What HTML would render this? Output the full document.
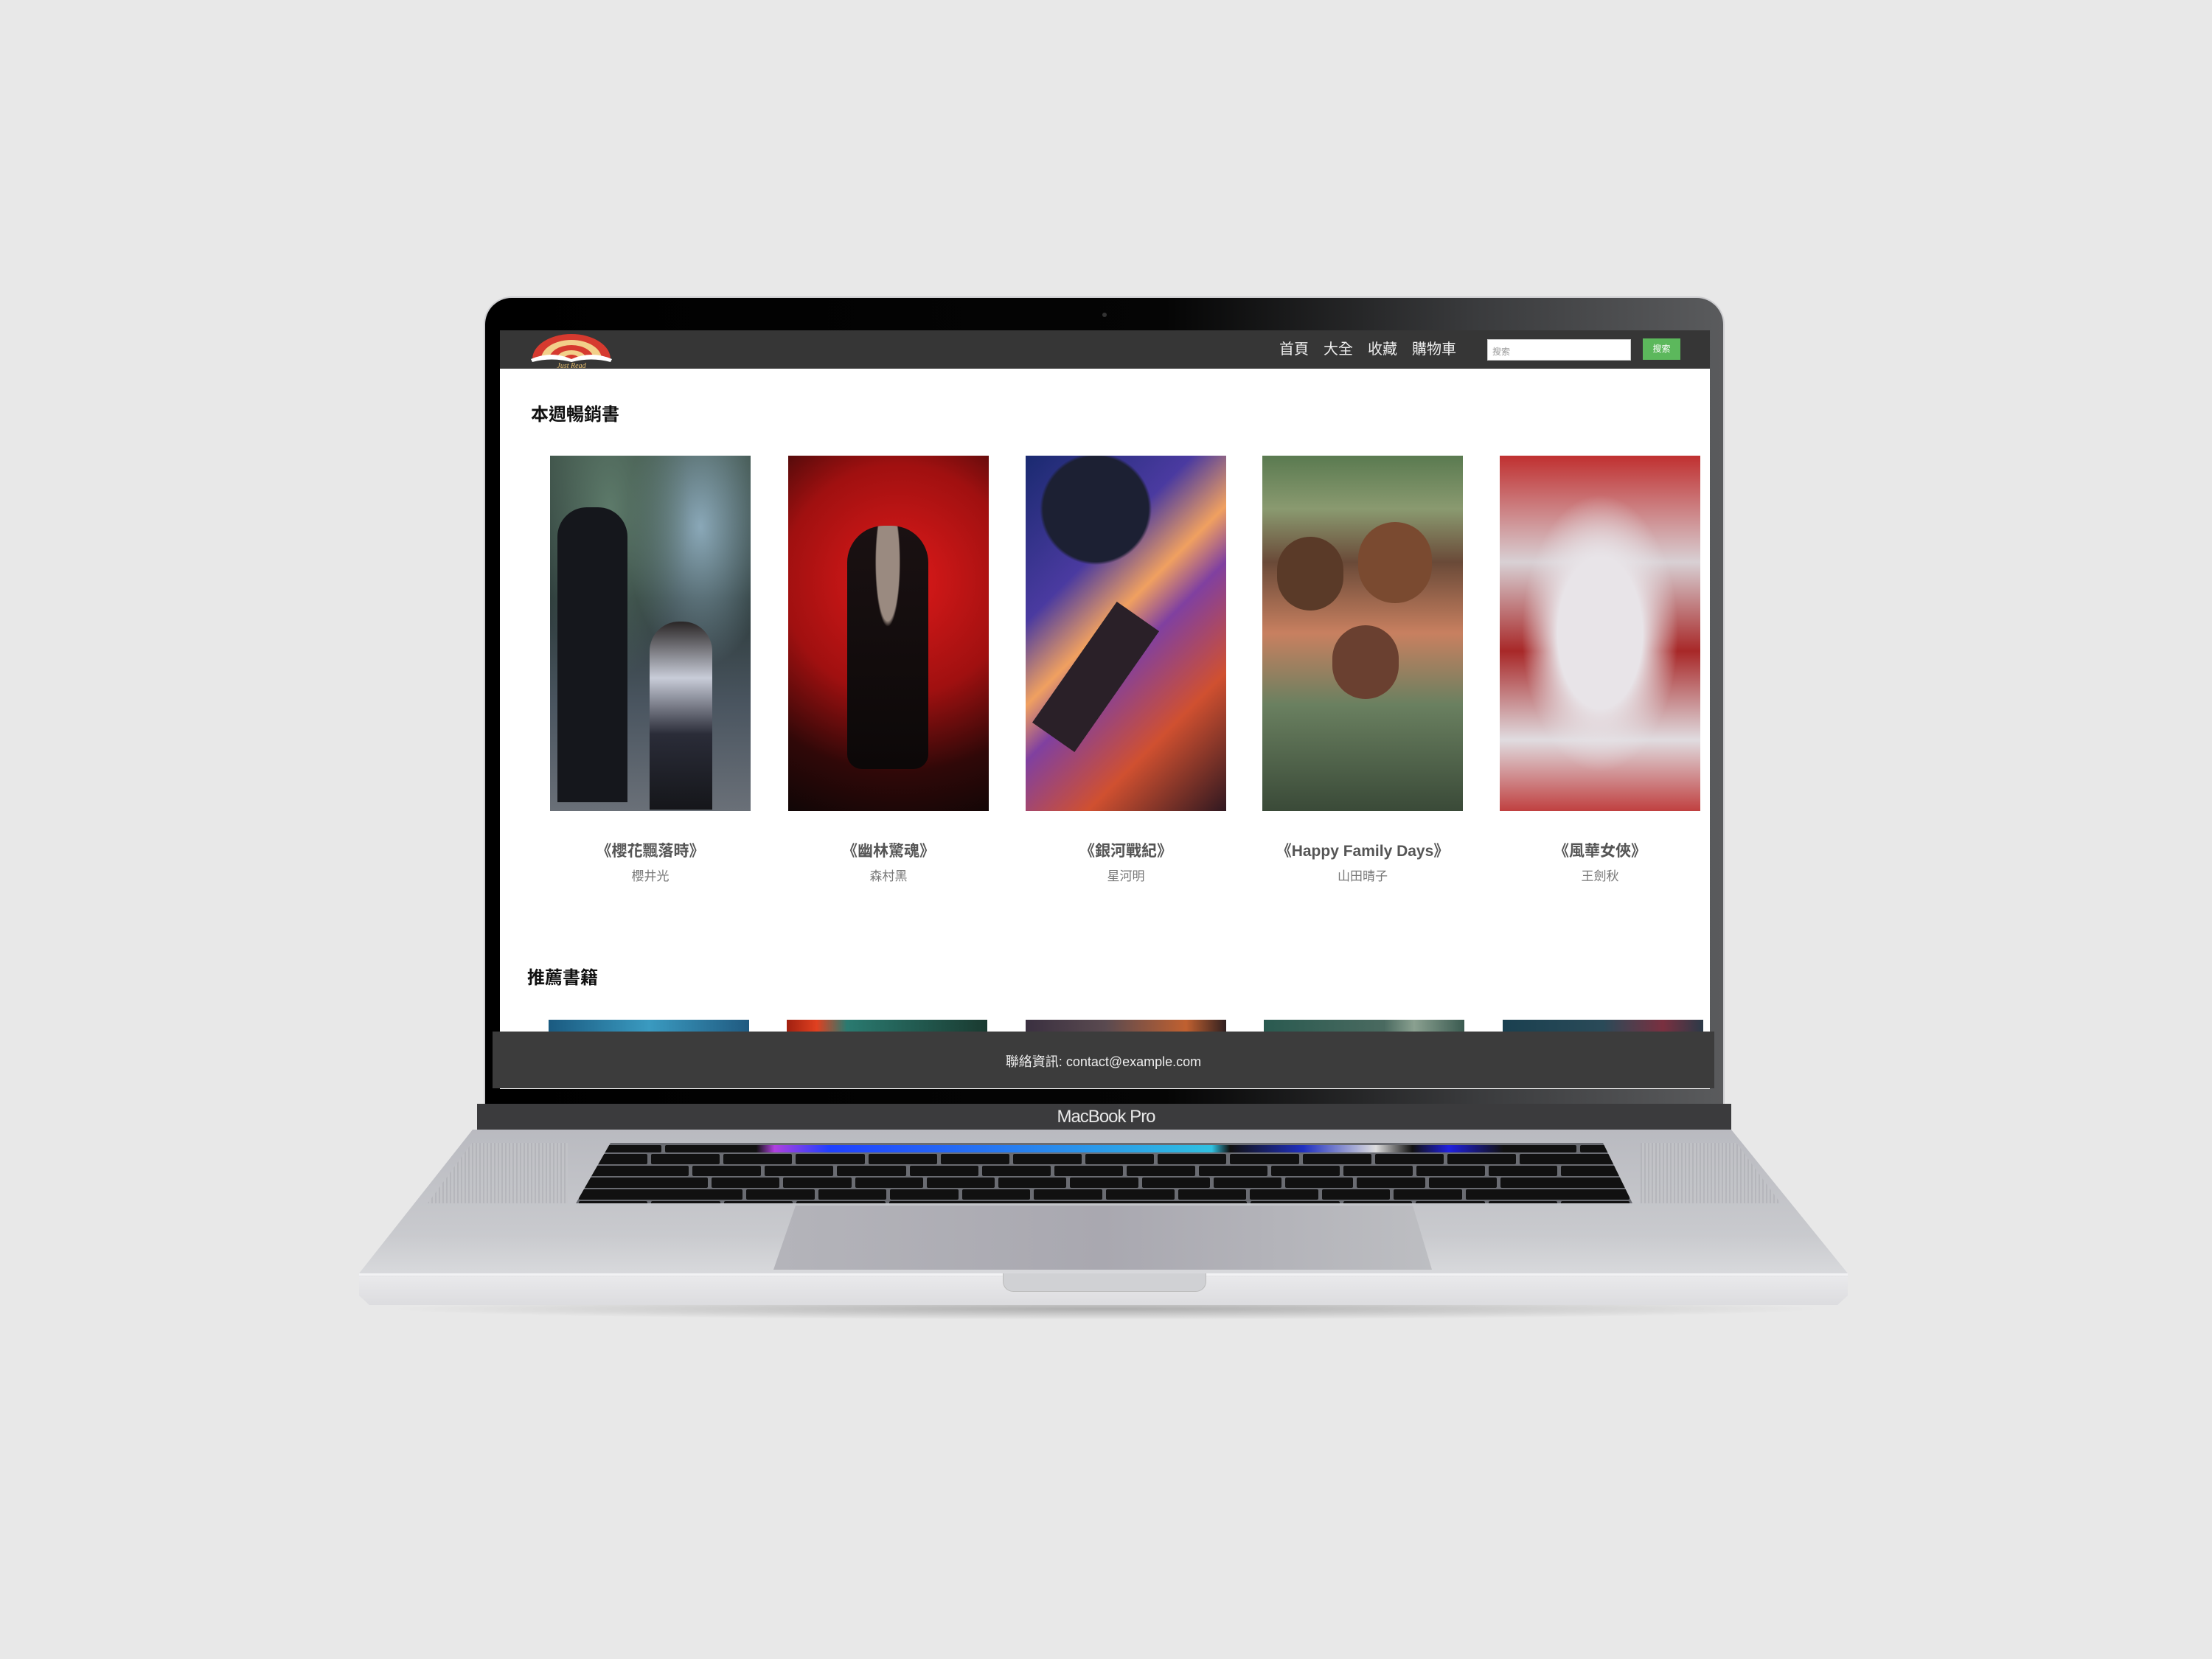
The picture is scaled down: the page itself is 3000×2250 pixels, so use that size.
<!DOCTYPE html>
<html><head><meta charset="utf-8"><style>
*{margin:0;padding:0;box-sizing:border-box}
body{width:3000px;height:2250px;background:#e8e8e8;position:relative;overflow:hidden;font-family:"Liberation Sans","Noto Sans CJK TC",sans-serif}
.abs{position:absolute}
.book{position:absolute;top:618px;width:272px;height:482px}
.cap{position:absolute;top:1138px;width:320px;text-align:center}
.cap b{display:block;font-size:21px;color:#555;font-weight:bold}
.cap span{display:block;font-size:17px;color:#777;margin-top:6px}
.b2{position:absolute;top:1383px;width:272px;height:16px}
.kb{position:absolute;left:781px;top:1550px;width:1433px;height:82px;clip-path:polygon(47px 0,1393px 0,1433px 100%,0 100%);background:#6a6c72}
.row{display:flex;gap:5px;height:14px;margin:2px 4px}
.row div{flex:1;background:#111;border-radius:2px}
</style></head><body>
<div class="abs" style="left:520px;top:1760px;width:1960px;height:30px;background:radial-gradient(ellipse at center,rgba(0,0,0,.25),rgba(0,0,0,0) 70%)"></div>
<div class="abs" style="left:487px;top:1532px;width:2019px;height:238px;background:linear-gradient(180deg,#b9bac0 0%,#c9cace 60%,#d8d9dc 82%,#e9e9eb 84%,#dcdcdf 100%);clip-path:polygon(154px 0,1861px 0,2019px 195px,2019px 225px,2005px 238px,14px 238px,0 225px,0 195px)"></div>
<div class="abs" style="left:487px;top:1727px;width:2019px;height:3px;background:#f2f2f4"></div>
<div class="abs" style="left:580px;top:1550px;width:190px;height:82px;background:repeating-linear-gradient(90deg,#b0b1b6 0 2px,#c3c4c8 2px 5px);clip-path:polygon(60px 0,190px 0,190px 100%,0 100%);opacity:.7"></div>
<div class="abs" style="left:2225px;top:1550px;width:190px;height:82px;background:repeating-linear-gradient(90deg,#b0b1b6 0 2px,#c3c4c8 2px 5px);clip-path:polygon(0 0,130px 0,190px 100%,0 100%);opacity:.7"></div>
<div class="kb">
 <div class="row" style="height:10px;margin-top:3px"><div style="flex:1"></div><div style="flex:11;background:linear-gradient(90deg,#111 0 10%,#b040e0 12%,#2040ff 18%,#30c0e0 60%,#111 62%,#2030c0 70%,#ddd 78%,#111 82%,#2020e0 86%,#111 92%)"></div><div style="flex:.6"></div></div>
 <div class="row"><div></div><div></div><div></div><div></div><div></div><div></div><div></div><div></div><div></div><div></div><div></div><div></div><div></div><div style="flex:1.6"></div></div>
 <div class="row"><div style="flex:1.6"></div><div></div><div></div><div></div><div></div><div></div><div></div><div></div><div></div><div></div><div></div><div></div><div></div><div></div></div>
 <div class="row"><div style="flex:1.9"></div><div></div><div></div><div></div><div></div><div></div><div></div><div></div><div></div><div></div><div></div><div></div><div style="flex:1.9"></div></div>
 <div class="row"><div style="flex:2.4"></div><div></div><div></div><div></div><div></div><div></div><div></div><div></div><div></div><div></div><div></div><div style="flex:2.4"></div></div>
 <div class="row"><div></div><div></div><div></div><div style="flex:1.3"></div><div style="flex:5.2"></div><div style="flex:1.3"></div><div></div><div></div><div></div><div></div></div>
</div>
<div class="abs" style="left:1049px;top:1635px;width:893px;height:87px;background:linear-gradient(90deg,#b4b4ba,#a9a8b0 50%,#bdbec2);clip-path:polygon(30px 0,867px 0,893px 100%,0 100%)"></div>
<div class="abs" style="left:1360px;top:1727px;width:276px;height:25px;background:#d0d1d4;border-radius:0 0 14px 14px;border:1px solid #bbb;border-top:none"></div>
<div class="abs" style="left:656px;top:402px;width:1683px;height:1130px;background:linear-gradient(90deg,#000 0%,#050505 55%,#3a3b3d 80%,#5a5b5d 100%);border-radius:38px 38px 0 0;border:2px solid #cfcfd2;border-bottom:none"></div>
<div class="abs" style="left:647px;top:1497px;width:1701px;height:35px;background:#3b3b3d"></div>
<div class="abs" style="left:1400px;top:1499px;width:200px;text-align:center;color:#e8e8e8;font-size:24px;line-height:32px;letter-spacing:-1px">MacBook Pro</div>
<div class="abs" style="left:1495px;top:424px;width:6px;height:6px;border-radius:50%;background:#333"></div>
<div class="abs" style="left:678px;top:448px;width:1641px;height:1029px;background:#fff;overflow:hidden">
 <div class="abs" style="left:0;top:0;width:1641px;height:52px;background:#363636"></div>
 <svg class="abs" style="left:42px;top:3px" width="110" height="48" viewBox="0 0 110 48">
  <path d="M2 36 A53 34 0 0 1 108 36 Z" fill="#d63a2f"/>
  <path d="M14 36 A41 26 0 0 1 96 36 Z" fill="#f2d08a"/>
  <path d="M25 36 A30 19 0 0 1 85 36 Z" fill="#d63a2f"/>
  <path d="M35 36 A20 12 0 0 1 75 36 Z" fill="#f2d08a"/>
  <path d="M45 36 A10 6 0 0 1 65 36 Z" fill="#d63a2f"/>
  <path d="M0 36 Q28 24 55 36 Q82 24 110 36 L108 40 Q82 33 55 40 Q28 33 2 40 Z" fill="#fff"/>
  <text x="55" y="48" text-anchor="middle" font-size="10" font-style="italic" fill="#e8c070" font-family="Liberation Serif,serif">Just Read</text>
 </svg>
 <div class="abs" style="left:1057px;top:9px;color:#eee;font-size:20px;white-space:nowrap"><span>首頁</span><span style="margin-left:20px">大全</span><span style="margin-left:20px">收藏</span><span style="margin-left:20px">購物車</span></div>
 <div class="abs" style="left:1339px;top:12px;width:195px;height:29px;background:#fff;border:1px solid #ccc;font-size:12px;color:#999;padding:7px 6px">搜索</div>
 <div class="abs" style="left:1550px;top:11px;width:51px;height:29px;background:#5cb85c;color:#fff;font-size:12px;text-align:center;line-height:29px">搜索</div>
 <div class="abs" style="left:42px;top:94px;font-size:24px;font-weight:bold;color:#111">本週暢銷書</div>
 <div class="abs" style="left:37px;top:858px;font-size:24px;font-weight:bold;color:#111">推薦書籍</div>
</div>
<div class="book" style="left:746px;background:radial-gradient(ellipse at 30% 15%,#5d7a6a,transparent 40%),radial-gradient(ellipse at 75% 20%,#8aa8b8,transparent 35%),linear-gradient(180deg,#3c4f46 0%,#2c3a3a 40%,#4a5560 70%,#6a7078 100%)">
 <div class="abs" style="left:10px;top:70px;width:95px;height:400px;background:#15171c;border-radius:40px 40px 0 0"></div>
 <div class="abs" style="left:135px;top:225px;width:85px;height:255px;background:linear-gradient(#2a2626,#c8ccd8 30%,#2a2c38 60%,#15161a);border-radius:40px 40px 0 0"></div>
</div>
<div class="book" style="left:1069px;background:radial-gradient(circle at 55% 35%,#e01a1a,#a01010 45%,#300808 75%,#100606 100%)">
 <div class="abs" style="left:80px;top:95px;width:110px;height:330px;background:radial-gradient(ellipse at 50% 15%,#9a8a80 0 20%,transparent 22%),linear-gradient(#1a1112,#0c0808);border-radius:50px 50px 20px 20px"></div>
</div>
<div class="book" style="left:1391px;background:radial-gradient(circle at 35% 15%,#1c2033 0 16%,transparent 17%),linear-gradient(135deg,#1a2a70 0%,#4a3aa0 30%,#f0a060 45%,#8040a0 55%,#d05030 75%,#301820 100%)">
 <div class="abs" style="left:60px;top:200px;width:70px;height:200px;background:#2a2028;transform:rotate(35deg)"></div>
</div>
<div class="book" style="left:1712px;background:linear-gradient(180deg,#5a7a50 0%,#8a9a70 15%,#6a4a38 30%,#c88060 50%,#6a8060 70%,#3a4a38 100%)">
 <div class="abs" style="left:20px;top:110px;width:90px;height:100px;background:#5a3a28;border-radius:45px"></div>
 <div class="abs" style="left:130px;top:90px;width:100px;height:110px;background:#7a4a30;border-radius:50px"></div>
 <div class="abs" style="left:95px;top:230px;width:90px;height:100px;background:#6a4030;border-radius:45px"></div>
</div>
<div class="book" style="left:2034px;background:radial-gradient(ellipse at 50% 50%,#e8e4e8 0 30%,transparent 55%),linear-gradient(180deg,#c03030 0%,#d8d0d4 30%,#a82828 55%,#e0dce0 80%,#c04040 100%)"></div>
<div class="cap" style="left:722px"><b>《櫻花飄落時》</b><span>櫻井光</span></div>
<div class="cap" style="left:1045px"><b>《幽林驚魂》</b><span>森村黑</span></div>
<div class="cap" style="left:1367px"><b>《銀河戰紀》</b><span>星河明</span></div>
<div class="cap" style="left:1688px"><b>《Happy Family Days》</b><span>山田晴子</span></div>
<div class="cap" style="left:2010px"><b>《風華女俠》</b><span>王劍秋</span></div>
<div class="b2" style="left:744px;background:linear-gradient(90deg,#1a5a80,#3a9ac0,#205a80)"></div>
<div class="b2" style="left:1067px;background:linear-gradient(90deg,#a02010,#e04020 15%,#2a7a70 30%,#1a3a30)"></div>
<div class="b2" style="left:1391px;background:linear-gradient(90deg,#3a3040,#5a4a50,#c06030 80%,#302020)"></div>
<div class="b2" style="left:1714px;background:linear-gradient(90deg,#2a5a50,#4a6a60 60%,#8aa090 75%,#3a5a50)"></div>
<div class="b2" style="left:2038px;background:linear-gradient(90deg,#1a4050,#2a4a58 50%,#7a3040 80%,#2a3a48)"></div>
<div class="abs" style="left:668px;top:1399px;width:1657px;height:77px;background:#3c3c3c;color:#eee;font-size:18px;text-align:center;line-height:82px">聯絡資訊: contact@example.com</div>
</body></html>
